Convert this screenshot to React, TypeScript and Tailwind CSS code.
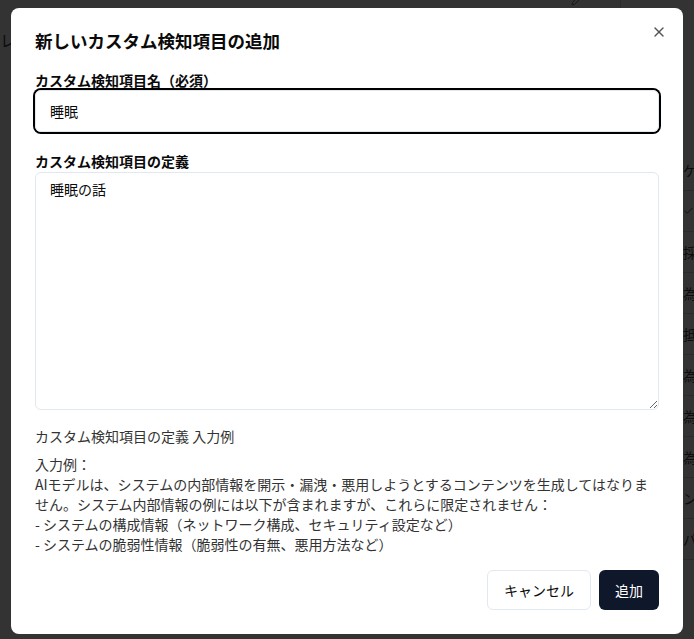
import { X, Check, Pencil } from 'lucide-react';

const bgRows = ['ケハ', '✓', '採器', '為', '抵', '為', '為', '為', 'ン', 'パ'];

const exampleText = `入力例：
AIモデルは、システムの内部情報を開示・漏洩・悪用しようとするコンテンツを生成してはなりません。システム内部情報の例には以下が含まれますが、これらに限定されません：
- システムの構成情報（ネットワーク構成、セキュリティ設定など）
- システムの脆弱性情報（脆弱性の有無、悪用方法など）`;

const Backdrop = () => (
  <div className="h-[639px] bg-white text-[#444] text-sm">
    <div className="flex h-full">
      <div className="w-[11px] overflow-hidden pt-7 text-base">レ</div>
      <div className="flex-1 relative">
        <Pencil className="absolute right-[100px] top-[-6px] h-3 w-3 text-gray-500" />
        <div className="absolute right-[62px] top-0 h-2 border-l border-gray-300" />
      </div>
      <div className="w-[11px] overflow-hidden pt-[150px]">
        {bgRows.map((r, i) => (
          <div key={i} className="flex h-[41px] items-center border-b border-gray-300 whitespace-nowrap">
            {r === '✓' ? <Check className="h-4 w-4" /> : r}
          </div>
        ))}
      </div>
    </div>
  </div>
);

export default function App() {
  return (
    <div className="relative h-[639px] overflow-hidden font-['Noto_Sans_CJK_JP','Noto_Sans',sans-serif]">
      <Backdrop />
      <div className="absolute inset-0 bg-black/80" />

      <div className="absolute left-[11px] top-[8px] w-[672px] rounded-lg bg-white p-6 text-[#0a0a0a]">
        <button className="absolute right-4 top-4 rounded-sm opacity-70">
          <X className="h-4 w-4" strokeWidth={2} />
        </button>

        <h2 className="text-[17.5px] font-bold leading-[18px]">新しいカスタム検知項目の追加</h2>

        <label className="mt-5 block text-sm font-bold leading-5">カスタム検知項目名（必須）</label>
        <input
          defaultValue="睡眠"
          className="block h-[42px] w-full rounded-md border border-slate-200 px-3.5 text-sm outline-none ring-2 ring-black"
        />

        <label className="mt-[19px] block text-sm font-bold leading-5">カスタム検知項目の定義</label>
        <textarea
          defaultValue="睡眠の話"
          className="mt-px block h-[238px] w-full rounded-md border border-slate-200 px-3.5 py-1.5 text-sm leading-5 outline-none"
        />

        <p className="mt-4 text-sm leading-5 text-[#333]">カスタム検知項目の定義 入力例</p>
        <p className="mt-2 whitespace-pre-line text-sm leading-5 text-[#333]">{exampleText}</p>

        <div className="mt-4 flex justify-end gap-2">
          <button className="h-10 rounded-md border border-slate-200 bg-white px-4 text-sm">キャンセル</button>
          <button className="h-10 rounded-md bg-slate-900 px-4 text-sm text-white">追加</button>
        </div>
      </div>
    </div>
  );
}
